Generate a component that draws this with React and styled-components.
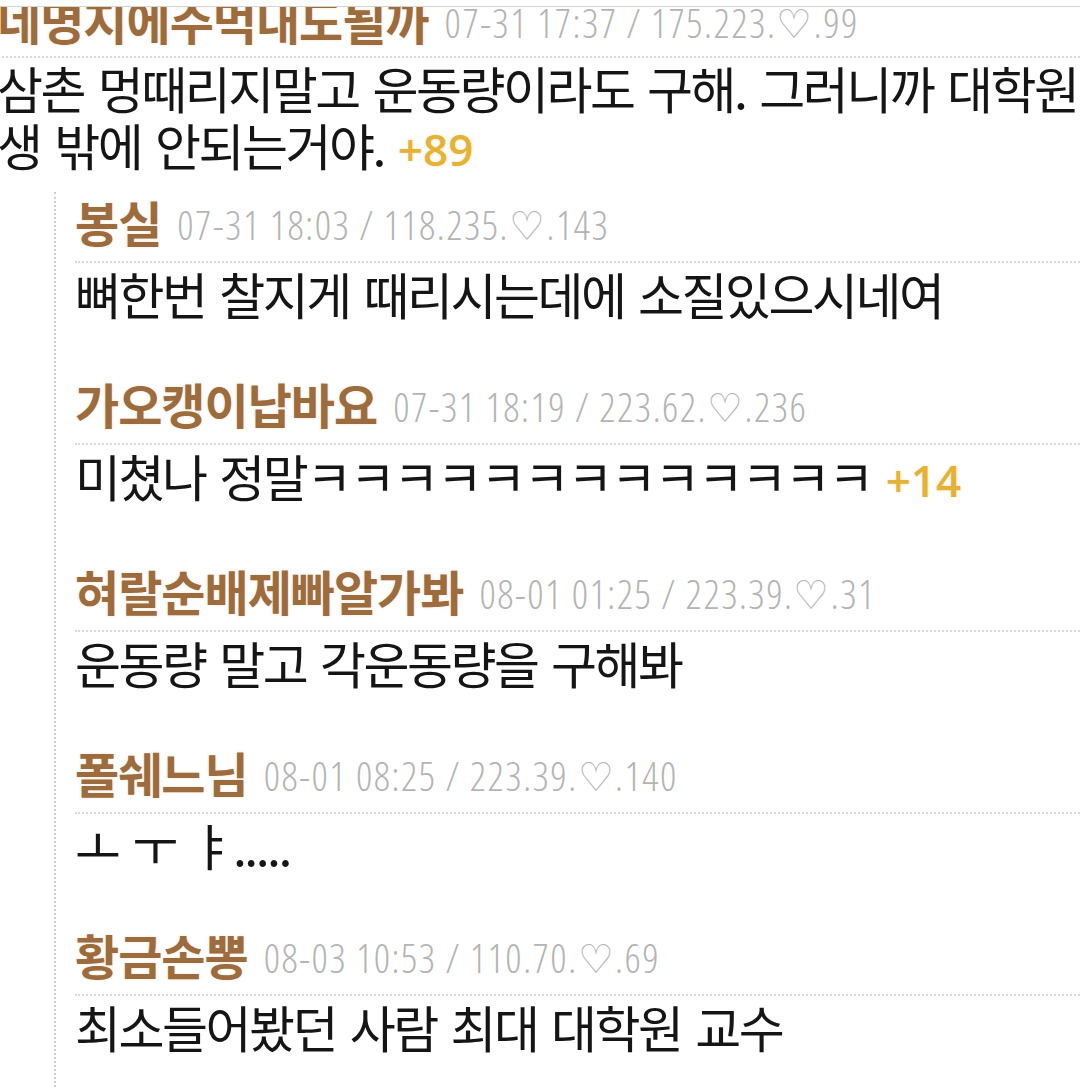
import styled, { createGlobalStyle } from 'styled-components';

const Global = createGlobalStyle`
  html, body {
    margin: 0;
    padding: 0;
    background: #fff;
  }
  body {
    font-family: "Noto Sans CJK KR", "Noto Sans", sans-serif;
    overflow: hidden;
  }
`;

const Page = styled.div`
  width: 1080px;
  height: 1089px;
  overflow: hidden;
  background: #fff;
  display: flex;
  flex-direction: column;
`;

const TopRule = styled.div`
  height: 6px;
  border-bottom: 1px solid #d4d4d4;
  flex-shrink: 0;
`;

const Thread = styled.div`
  flex: 1;
  overflow: hidden;
`;

const Comment = styled.div`
  margin-top: -6px;
  margin-left: -3px;
`;

// nickname + meta row, dotted rule underneath
const Head = styled.div`
  display: flex;
  align-items: center;
  height: 36px;
  padding-bottom: ${p => p.$pb || 22}px;
  border-bottom: 2px dotted #dadada;
  white-space: nowrap;
`;

const Nick = styled.span`
  font-family: "Noto Sans CJK KR", sans-serif;
  font-weight: 700;
  font-size: 48px;
  letter-spacing: -1px;
  color: #9c6c3e;
  text-shadow: 0 0 3px rgba(240, 200, 150, 0.45);
`;

const Meta = styled.span`
  margin-left: 16px;
  font-family: "Open Sans", "DejaVu Sans", sans-serif;
  font-weight: 300;
  font-size: 40px;
  font-stretch: 75%;
  letter-spacing: 1.5px;
  color: #b4b4b4;
  position: relative;
  top: 3px;
`;

const Body = styled.div`
  margin-top: ${p => p.$gap}px;
  font-family: "Noto Sans CJK KR", sans-serif;
  font-size: 50px;
  letter-spacing: -2.5px;
  word-spacing: 5px;
  line-height: ${p => p.$lh}px;
  color: #151515;
  white-space: nowrap;
`;

const Plus = styled.span`
  margin-left: 14px;
  font-family: "Open Sans", sans-serif;
  font-weight: 600;
  font-size: 44px;
  letter-spacing: 0;
  color: #e4b236;
  text-shadow: 0 0 3px rgba(245, 210, 120, 0.5);
`;

const Replies = styled.div`
  margin-top: 14px;
  margin-left: 54px;
  padding-top: 11px;
  padding-left: 19px;
  border-left: 2px dotted #cfcfcf;
  min-height: 1000px;
`;

const Reply = styled.div`
  margin-bottom: 65px;
`;

const replies = [
  { nick: '봉실', meta: '07-31 18:03 / 118.235.♡.143', text: '뼈한번 찰지게 때리시는데에 소질있으시네여' },
  { nick: '가오캥이납바요', meta: '07-31 18:19 / 223.62.♡.236', text: '미쳤나 정말ㅋㅋㅋㅋㅋㅋㅋㅋㅋㅋㅋㅋㅋ', plus: '+14' },
  { nick: '혀랄순배제빠알가봐', meta: '08-01 01:25 / 223.39.♡.31', text: '운동량 말고 각운동량을 구해봐' },
  { nick: '폴쉐느님', meta: '08-01 08:25 / 223.39.♡.140', text: 'ㅗ ㅜ ㅑ.....' },
  { nick: '황금손뽕', meta: '08-03 10:53 / 110.70.♡.69', text: '최소들어봤던 사람 최대 대학원 교수' },
];

export default function App() {
  return (
    <Page>
      <Global />
      <TopRule />
      <Thread>
        <Comment>
          <Head $pb={19}>
            <Nick>네명지에주먹내도될까</Nick>
            <Meta>07-31 17:37 / 175.223.♡.99</Meta>
          </Head>
          <Body $gap={1} $lh={57}>
            삼촌 멍때리지말고 운동량이라도 구해. 그러니까 대학원
            <br />
            생 밖에 안되는거야.
            <Plus>+89</Plus>
          </Body>
        </Comment>
        <Replies>
          {replies.map(r => (
            <Reply key={r.nick}>
              <Head>
                <Nick>{r.nick}</Nick>
                <Meta>{r.meta}</Meta>
              </Head>
              <Body $gap={3} $lh={54}>
                {r.text}
                {r.plus && <Plus>{r.plus}</Plus>}
              </Body>
            </Reply>
          ))}
        </Replies>
      </Thread>
    </Page>
  );
}
